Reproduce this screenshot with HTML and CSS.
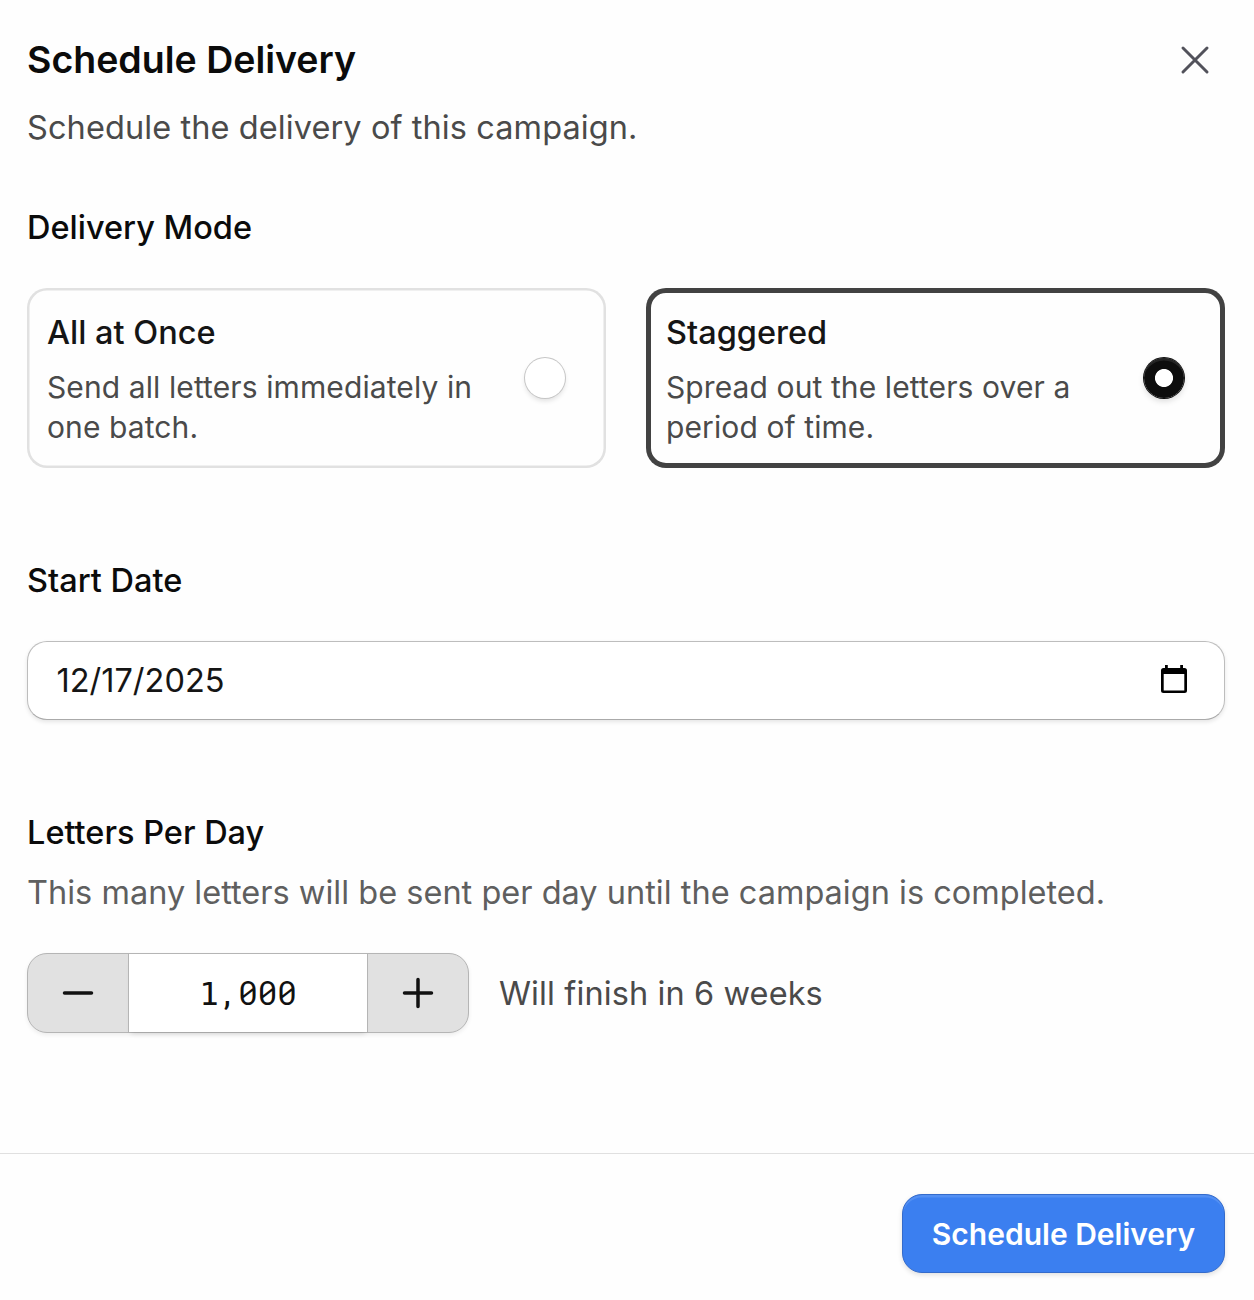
FILE: index.html
```html
<!DOCTYPE html>
<html lang="en">
<head>
<meta charset="utf-8">
<title>Schedule Delivery</title>
<link rel="stylesheet" href="styles.css">
</head>
<body>
<div class="dialog" role="dialog" aria-labelledby="title">
  <main class="content">
    <header class="header">
      <h1 class="title" id="title">Schedule Delivery</h1>
      <button class="close" aria-label="Close">
        <svg width="30" height="30" viewBox="0 0 30 30" fill="none" stroke="#52525b" stroke-width="3" stroke-linecap="round"><path d="M3 3l24 24M27 3L3 27"/></svg>
      </button>
    </header>
    <p class="subtitle">Schedule the delivery of this campaign.</p>

    <section class="field">
      <h2 class="label">Delivery Mode</h2>
      <div class="modes" role="radiogroup">
        <div class="mode" role="radio" aria-checked="false">
          <div class="mode-text">
            <h3 class="mode-title">All at Once</h3>
            <p class="mode-desc">Send all letters immediately in one batch.</p>
          </div>
          <span class="radio"></span>
        </div>
        <div class="mode mode-selected" role="radio" aria-checked="true">
          <div class="mode-text">
            <h3 class="mode-title">Staggered</h3>
            <p class="mode-desc">Spread out the letters over a period of time.</p>
          </div>
          <span class="radio radio-on"></span>
        </div>
      </div>
    </section>

    <section class="field field-date">
      <h2 class="label">Start Date</h2>
      <div class="date">
        <span class="date-value">12/17/2025</span>
        <svg width="26" height="28" viewBox="0 0 26 28"><path fill="#000" fill-rule="evenodd" d="M4 0h2.800v3h12.400V0H22v3h1.500A2.500 2.500 0 0 1 26 5.500v20a2.500 2.500 0 0 1-2.500 2.500h-21A2.500 2.500 0 0 1 0 25.500v-20A2.500 2.500 0 0 1 2.500 3H4zM2.700 9v16.400h20.600V9z"/></svg>
      </div>
    </section>

    <section class="field field-rate">
      <h2 class="label">Letters Per Day</h2>
      <p class="hint">This many letters will be sent per day until the campaign is completed.</p>
      <div class="rate">
        <div class="stepper">
          <button class="step" aria-label="Decrease"><svg width="32" height="32" viewBox="0 0 32 32" stroke="#111" stroke-width="3.500" stroke-linecap="round"><path d="M2.500 16h27"/></svg></button>
          <span class="amount"><span class="serif-one">1</span>,000</span>
          <button class="step" aria-label="Increase"><svg width="32" height="32" viewBox="0 0 32 32" stroke="#111" stroke-width="3.500" stroke-linecap="round"><path d="M2.500 16h27M16 2.500v27"/></svg></button>
        </div>
        <span class="finish">Will finish in 6 weeks</span>
      </div>
    </section>
  </main>
  <footer class="footer">
    <button class="submit">Schedule Delivery</button>
  </footer>
</div>
</body>
</html>
```

FILE: styles.css
```css
* { box-sizing: border-box; margin: 0; padding: 0; }
body {
  background: #fefefe;
  color: #0b0b0b;
  font-family: Inter, "Liberation Sans", sans-serif;
  font-size: 32.5px;
  line-height: 40px;
  font-optical-sizing: none;
}
button { border: 0; background: none; font: inherit; letter-spacing: inherit; color: inherit; }
svg { display: block; }

.dialog { display: flex; flex-direction: column; height: 1300px; }
.content { flex: 1; padding: 35px 29px 0 27px; }
.header { display: flex; justify-content: space-between; align-items: center; height: 50px; }
.title { font-size: 37.5px; line-height: 50px; font-weight: 600; }
.close { padding: 0 15px; }
.subtitle { margin-top: 23px; color: #4a4a4a; letter-spacing: 0.09px; }

.field { margin-top: 60px; }
.label { font-size: 32.5px; font-weight: 500; }

.modes { display: grid; grid-template-columns: 1fr 1fr; gap: 40px; margin-top: 40px; }
.mode {
  display: flex;
  align-items: center;
  justify-content: space-between;
  height: 180px;
  padding: 5px 40px 0 20px;
  border-radius: 20px;
  box-shadow: inset 0 0 0 2.5px #e1e1e1;
}
.mode-selected { box-shadow: inset 0 0 0 5px #424242; }
.mode-text { width: 440px; }
.mode-title { font-size: 32.5px; font-weight: 500; color: #151515; }
.mode-desc { margin: 14px 0 1px; font-size: 30px; color: #4a4a4a; letter-spacing: 0.1px; }
.radio {
  width: 40px;
  height: 40px;
  margin: 0 1px 5px 0;
  border-radius: 50%;
  background: #fff;
  box-shadow: 0 0 0 1px #c6c6c6, 0 3px 5px rgba(0, 0, 0, .12);
}
.radio-on {
  background: radial-gradient(circle, #fff 8.600px, #0d0d0d 9.400px);
  box-shadow: 0 0 0 1px #0d0d0d, inset 0 3px 0 -0.500px #242424, 0 3px 6px rgba(0, 0, 0, .15);
}

.field-date { margin-top: 93px; }
.date {
  display: flex;
  align-items: center;
  justify-content: space-between;
  height: 79px;
  margin-top: 40px;
  padding: 0 37px 3px 28.5px;
  border: 1px solid #bdbdbd;
  border-bottom-color: #aaa;
  border-radius: 20px;
  background: #fff;
  box-shadow: 0 2px 4px rgba(0, 0, 0, .1);
}
.date-value { padding-top: 3px; color: #151515; }

.field-rate { margin-top: 93px; }
.hint { margin-top: 20px; color: #5f5f5f; letter-spacing: 0.01px; }
.rate { display: flex; align-items: center; gap: 30px; margin-top: 40px; }
.stepper {
  display: flex;
  width: 442px;
  height: 80px;
  border: 1px solid #b5b5b5;
  border-radius: 20px;
  background: #e1e1e1;
  box-shadow: 0 2px 4px rgba(0, 0, 0, .07);
}
.step { display: grid; place-items: center; width: 100px; }
.amount {
  flex: 1;
  border: solid #b5b5b5;
  border-width: 0 1px;
  background: #fff;
  box-shadow: 0 5px 5px -3px rgba(0, 0, 0, .1);
  color: #111;
  font-family: "Roboto Mono", "DejaVu Sans Mono", monospace;
  text-align: center;
  line-height: 77px;
}
.serif-one { font-family: "DejaVu Sans Mono", monospace; line-height: 1; }
.finish { padding-top: 2px; color: #4a4a4a; letter-spacing: 0.1px; }

.footer {
  display: flex;
  justify-content: flex-end;
  height: 147px;
  padding: 40px 29px 0 0;
  border-top: 1px solid #e0e0e0;
}
.submit {
  width: 323px;
  height: 79px;
  border: 1px solid #346bcb;
  border-radius: 20px;
  background: #3b7ff0;
  box-shadow: inset 0 3px 0 -0.500px #528ff3, 0 2px 5px rgba(0, 0, 0, .12);
  color: #fff;
  font-size: 30px;
  font-weight: 600;
}
```
